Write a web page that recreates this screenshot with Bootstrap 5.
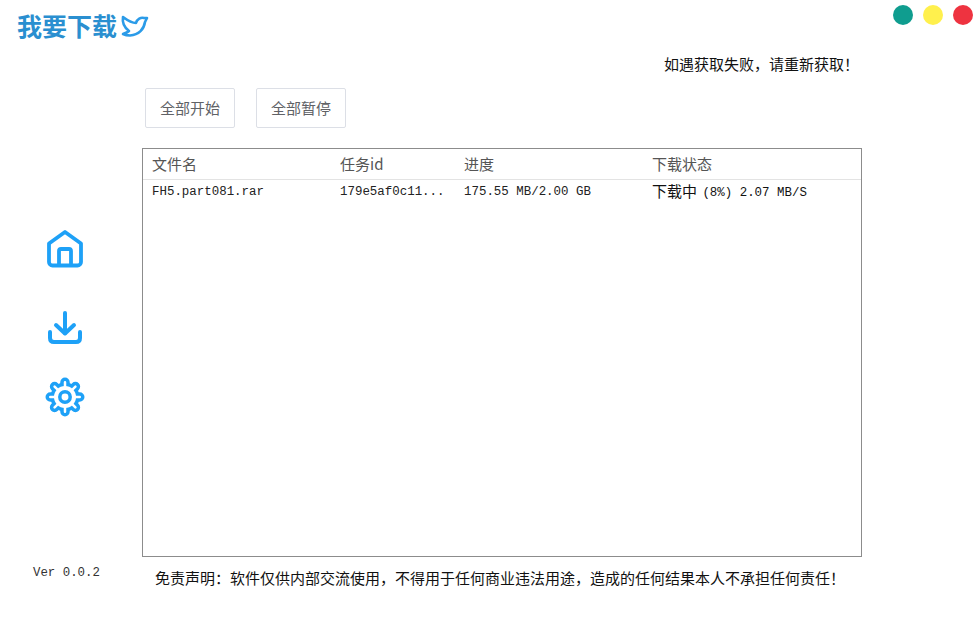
<!DOCTYPE html>
<html lang="zh">
<head>
<meta charset="utf-8">
<title>我要下载</title>
<link href="https://cdn.jsdelivr.net/npm/bootstrap@5.3.0/dist/css/bootstrap.min.css" rel="stylesheet">
<style>
html,body{margin:0;background:#fff;overflow:hidden}
body{font-family:"Noto Sans CJK SC","Liberation Sans",sans-serif;font-size:15px;color:#222}
.app-shell{width:979px;height:626px}
.top-bar{height:50px;padding:5px 6px 0 17px}
.brand-name{font-size:25px;line-height:41px;font-weight:700;color:#2a8fd0}
.dots-wrap{column-gap:10px}
.win-dot{width:20px;height:20px;border-radius:50%}
.dot-green{background:#0f9d8f}.dot-yellow{background:#fff04d}.dot-red{background:#ee3340}
.side-col{width:142px;flex:none}
.nav-icons{padding-top:177px;padding-left:44px}
.nav-icons svg{display:block}
.nav-icons .icon-dl{margin-top:38px}
.nav-icons .icon-gear{margin-top:27px}
.ver-text{font-family:"Liberation Mono",monospace;font-size:12.4px;line-height:16px;color:#333;padding-left:33px;height:23px}
.main-col{width:720px;flex:none}
.notice-text{height:38px;line-height:28px;text-align:right;padding-right:3px;color:#111}
.action-btn{width:90px;height:40px;padding:0;border:1px solid #dcdfe6;border-radius:2px;background:#fff;color:#606266;font-size:15px;line-height:38px}
.action-btn:hover{background:#fff;color:#606266;border-color:#dcdfe6}
.btn-rowx{gap:21px;margin-left:3px;height:60px}
.task-box{height:409px;border:1px solid #8c8c8c}
.task-table{table-layout:fixed;width:100%;margin:0;--bs-table-bg:transparent}
.task-table th,.task-table td{padding:0 0 0 9px;border:0;white-space:nowrap;overflow:hidden}
.task-table th{height:30px;font-weight:400;color:#555;font-size:15px;line-height:30px;border-bottom:1px solid #e3e3e3}
.task-table td{height:22px;line-height:22px;padding-top:1px;font-family:"Liberation Mono","Noto Sans CJK SC",monospace;font-size:12.45px;color:#222}
.task-table td.status-cell{font-family:"Noto Sans CJK SC",sans-serif;font-size:15px;color:#111;padding-top:0}
.mono-bit{font-family:"Liberation Mono",monospace;font-size:12.45px;margin-left:2px;vertical-align:1px}
.disclaimer{padding:11px 0 0 13px;line-height:20px;color:#111;white-space:nowrap}
</style>
</head>
<body>
<div class="app-shell d-flex flex-column">
  <div class="top-bar d-flex justify-content-between align-items-start">
    <div class="d-flex align-items-start">
      <span class="brand-name">我要下载</span>
      <svg width="32" height="41" viewBox="0 0 32 41" fill="none" stroke="#2b9be8" stroke-width="2.6" stroke-linejoin="round" stroke-linecap="round" aria-hidden="true"><path d="M6 12C10 15 14 18 19 18C20 14 24 12 27 13L30 13L28 17C27 24 22 30 13 30.500C10 30.500 8 30 6 29C9 28 11 27 12 26C8 23 5 18 6 12Z"/></svg>
    </div>
    <div class="d-flex dots-wrap">
      <span class="win-dot dot-green"></span><span class="win-dot dot-yellow"></span><span class="win-dot dot-red"></span>
    </div>
  </div>
  <div class="d-flex">
    <div class="side-col d-flex flex-column justify-content-between">
      <div class="nav-icons">
        <svg width="42" height="42" viewBox="0 0 42 42" fill="none" stroke="#1ea1f7" stroke-width="3.8" stroke-linejoin="round" stroke-linecap="round" aria-hidden="true"><path d="M5 16.500L21 5L37 16.500V35C37 37 35.500 38.500 33.500 38.500H8.500C6.500 38.500 5 37 5 35Z"/><path d="M15 38V24C15 22.800 15.800 22 17 22H25C26.200 22 27 22.800 27 24V38"/></svg>
        <svg class="icon-dl" width="42" height="42" viewBox="0 0 42 42" fill="none" stroke="#1ea1f7" stroke-width="4" stroke-linejoin="round" stroke-linecap="round" aria-hidden="true"><path d="M21 6V26"/><path d="M12 18L21 26.500L30 18"/><path d="M6 25V31C6 33.500 7.500 35 10 35H32C34.500 35 36 33.500 36 31V25"/></svg>
        <svg class="icon-gear" width="42" height="42" viewBox="0 0 42 42" fill="none" stroke-linecap="round" aria-hidden="true">
          <circle cx="21" cy="21" r="14.500" fill="#1ea1f7"/>
          <path stroke="#1ea1f7" stroke-width="9.500" d="M6.250 21H35.750M21 6.250V35.750M10.570 10.570L31.430 31.430M10.570 31.430L31.430 10.570"/>
          <circle cx="21" cy="21" r="11" fill="#fff"/>
          <path stroke="#fff" stroke-width="2.500" d="M6.250 21H35.750M21 6.250V35.750M10.570 10.570L31.430 31.430M10.570 31.430L31.430 10.570"/>
          <circle cx="21" cy="21" r="5.200" fill="#fff" stroke="#1ea1f7" stroke-width="3.500"/>
        </svg>
      </div>
      <div class="ver-text">Ver 0.0.2</div>
    </div>
    <div class="main-col">
      <div class="notice-text">如遇获取失败，请重新获取！</div>
      <div class="d-flex btn-rowx">
        <button type="button" class="btn action-btn">全部开始</button>
        <button type="button" class="btn action-btn">全部暂停</button>
      </div>
      <div class="task-box">
        <table class="table task-table">
          <colgroup><col style="width:188px"><col style="width:124px"><col style="width:188px"><col></colgroup>
          <thead><tr><th>文件名</th><th>任务id</th><th>进度</th><th>下载状态</th></tr></thead>
          <tbody><tr><td>FH5.part081.rar</td><td>179e5af0c11...</td><td>175.55 MB/2.00 GB</td><td class="status-cell">下载中 <span class="mono-bit">(8%) 2.07 MB/S</span></td></tr></tbody>
        </table>
      </div>
      <div class="disclaimer">免责声明：软件仅供内部交流使用，不得用于任何商业违法用途，造成的任何结果本人不承担任何责任！</div>
    </div>
  </div>
</div>
<script src="https://cdn.jsdelivr.net/npm/bootstrap@5.3.0/dist/js/bootstrap.bundle.min.js"></script>
</body>
</html>
